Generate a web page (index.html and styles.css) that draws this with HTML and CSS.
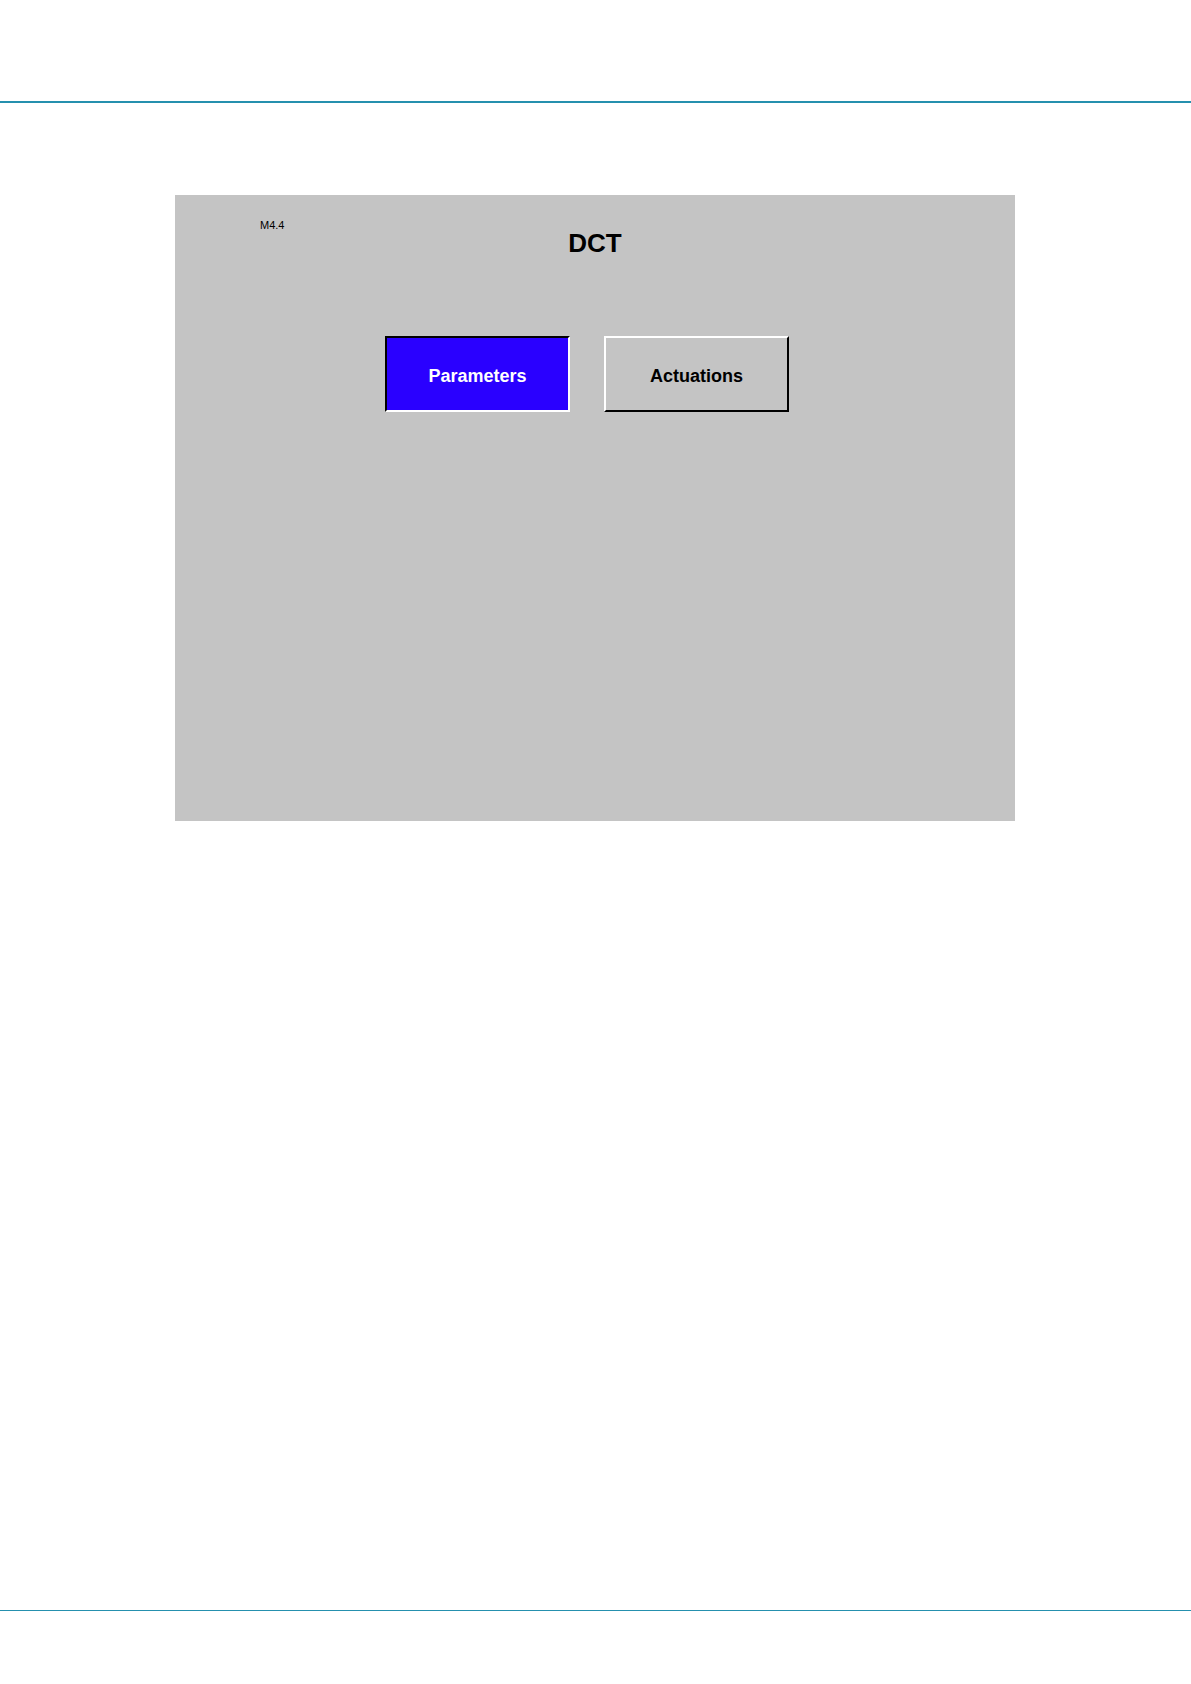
FILE: index.html
```
<!DOCTYPE html>
<html lang="en">
<head>
  <meta charset="UTF-8" />
  <meta name="viewport" content="width=device-width, initial-scale=1.0"/>
  <title>DCT</title>
  <link rel="stylesheet" href="styles.css">
</head>
<body>
  <header class="page-header"></header>

  <main class="page-content">
    <section class="screen">
      <div class="screen-header">
        <span class="screen-code">M4.4</span>
        <h1>DCT</h1>
      </div>
      <nav class="menu">
        <button type="button" class="menu-button active" aria-pressed="true">Parameters</button>
        <button type="button" class="menu-button" aria-pressed="false">Actuations</button>
      </nav>
    </section>
  </main>

  <footer class="page-footer"></footer>
</body>
</html>
```

FILE: styles.css
```
:root {
  --rule: #2590ae;
  --screen-bg: #c4c4c4;
  --active-bg: #2a00ff;
}
* { box-sizing: border-box; margin: 0; padding: 0; }
body {
  background: #fff;
  color: #000;
  font-family: "Liberation Sans", Arial, sans-serif;
  display: flex;
  flex-direction: column;
  min-height: 100vh;
}

/* PAGE RULES */
.page-header {
  height: 103px;
  border-bottom: 2px solid var(--rule);
}
.page-footer {
  height: 74px;
  border-top: 1px solid var(--rule);
}
.page-content {
  flex: 1;
  padding: 92px 176px 92px 175px;
}

/* SCREEN */
.screen {
  background: var(--screen-bg);
  min-height: 626px;
  padding-top: 23px;
}
.screen-header {
  display: grid;
  grid-template-columns: 1fr auto 1fr;
  align-items: start;
}
.screen-code {
  font-size: 11px;
  line-height: 14px;
  padding-left: 85px;
}
.screen-header h1 {
  font-size: 26px;
  line-height: 30px;
  margin-top: 10px;
}

/* MENU */
.menu {
  display: flex;
  justify-content: center;
  gap: 34px;
  margin-top: 78px;
  padding-right: 16px;
}
.menu-button {
  width: 185px;
  height: 76px;
  padding-top: 5px;
  background: var(--screen-bg);
  border: 2px solid;
  border-color: #fff #000 #000 #fff;
  color: #000;
  cursor: pointer;
  font-family: inherit;
  font-size: 18px;
  font-weight: bold;
}
.menu-button.active {
  background: var(--active-bg);
  border-color: #000 #fff #fff #000;
  color: #fff;
}
```
